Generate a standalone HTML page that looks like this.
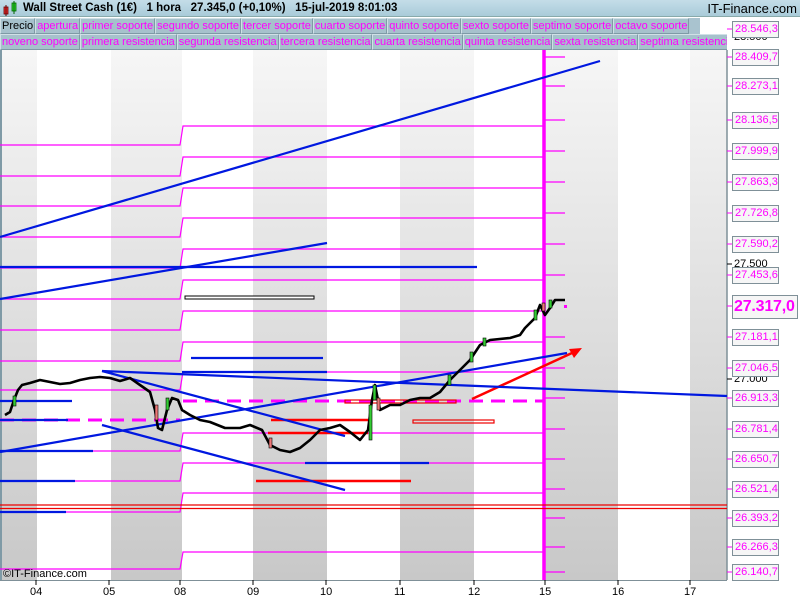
<!DOCTYPE html>
<html><head><meta charset="utf-8"><style>
*{margin:0;padding:0;box-sizing:border-box}
body{width:800px;height:600px;overflow:hidden;background:#fff;font-family:"Liberation Sans",sans-serif;position:relative}
#hdr{position:absolute;left:0;top:0;width:800px;height:17px;background:linear-gradient(#c4dde8,#a9cbd9);border-bottom:1px solid #8aa;font-weight:bold;font-size:11.5px;line-height:17px}
.row{position:absolute;left:0;width:727px;height:16px;background:#a9c3cf;white-space:nowrap;overflow:hidden;font-size:11px;line-height:15px}
.row span{display:inline-block;border:1px solid #7f9aa6;border-top-color:#d0e0e6;border-left-color:#d0e0e6;padding:0 1px;color:#f0f;background:#a6c1cc;height:16px;margin-right:0}
.lbl{position:absolute;left:732px;width:47px;height:17px;border:1px solid #7f9098;background:#f6f6f6;color:#f0f;font-size:11px;line-height:15px;padding-left:2px}
.blk{position:absolute;left:734px;font-size:11px;color:#000}
.tk{position:absolute;top:586px;font-size:11px;color:#000}
</style></head><body>
<div id="hdr"><svg width="22" height="17" style="position:absolute;left:2px;top:0"><rect x="2" y="7" width="4" height="7" fill="#e33" stroke="#600" stroke-width=".8"/><line x1="4" y1="5" x2="4" y2="16" stroke="#600"/><rect x="10" y="3" width="4" height="8" fill="#3d3" stroke="#060" stroke-width=".8"/><line x1="12" y1="1" x2="12" y2="14" stroke="#060"/></svg><span style="position:absolute;left:23px;white-space:pre">Wall Street Cash (1€)   1 hora   27.345,0 (+0,10%)   15-jul-2019 8:01:03</span><span style="position:absolute;right:3px;font-weight:normal;font-size:13px">IT-Finance.com</span></div>
<div class="row" style="top:18px;width:700px;"><span style="color:#000">Precio</span><span>apertura</span><span>primer soporte</span><span>segundo soporte</span><span>tercer soporte</span><span>cuarto soporte</span><span>quinto soporte</span><span>sexto soporte</span><span>septimo soporte</span><span>octavo soporte</span></div>
<div class="row" style="top:34px"><span>noveno soporte</span><span>primera resistencia</span><span>segunda resistencia</span><span>tercera resistencia</span><span>cuarta resistencia</span><span>quinta resistencia</span><span>sexta resistencia</span><span>septima resistencia</span></div>
<svg width="800" height="600" style="position:absolute;left:0;top:0">
<defs><linearGradient id="g" x1="0" y1="0" x2="0" y2="1"><stop offset="0" stop-color="#f6f6f6"/><stop offset="1" stop-color="#c8c8c8"/></linearGradient></defs>
<g transform="translate(0,50)">
<rect x="0" y="0" width="37" height="530" fill="url(#g)"/><rect x="111" y="0" width="71" height="530" fill="url(#g)"/><rect x="253" y="0" width="74" height="530" fill="url(#g)"/><rect x="400" y="0" width="74" height="530" fill="url(#g)"/><rect x="545" y="0" width="73" height="530" fill="url(#g)"/><rect x="690" y="0" width="37" height="530" fill="url(#g)"/>
</g>
<rect x="0" y="50" width="2" height="530" fill="#7f9aa6"/>
<line x1="727" y1="50" x2="727" y2="580" stroke="#7f9098" stroke-width="1.5"/>
<line x1="0" y1="580.5" x2="727" y2="580.5" stroke="#7f9098"/>
<g stroke="#f0f" stroke-width="1.2" fill="none">
<path d="M0 145H180L183 126H544M0 176H180L183 157H544M0 206H180L183 188H544M0 237H180L183 218H544M0 268H180L183 249H544M0 299H180L183 280H544M0 330H180L183 311H544M0 361H180L183 342H544M0 390H180L183 372H544M0 451H180L183 433H544M0 481H180L183 463H544M0 512H180L183 493H544M0 569H180L183 552H544"/>
<path d="M545 57H565M545 86H565M545 120H565M545 151H565M545 182H565M545 213H565M545 244H565M545 275H565M545 337H565M545 368H565M545 398H565M545 429H565M545 459H565M545 489H565M545 518H565M545 547H565M545 572H565"/>
</g>
<path d="M0 420H180M183 401H544" stroke="#f0f" stroke-width="3" stroke-dasharray="14,8"/>
<line x1="544" y1="50" x2="544" y2="580" stroke="#f0f" stroke-width="3.5"/>
<rect x="564" y="305" width="3" height="3" fill="#f0f"/>
<g stroke="#e00" stroke-width="1.2" fill="none"><path d="M0 505H727M0 508.5H727"/><rect x="345" y="400" width="111" height="3"/><rect x="413" y="420" width="81" height="3"/></g>
<g stroke="#f00" stroke-width="2.5"><path d="M271 420H368M268 433H368M256 481H411"/><line x1="472" y1="399" x2="572" y2="353"/></g>
<polygon points="582,348 569,349 574,358" fill="#f00"/>
<rect x="185" y="296" width="129" height="3" fill="#fff" stroke="#000" stroke-width="1"/>
<g stroke="#0018e0" stroke-width="2.2" fill="none">
<line x1="0" y1="237" x2="600" y2="61"/><line x1="0" y1="299" x2="327" y2="243"/>
<line x1="0" y1="452" x2="567" y2="353"/><line x1="102" y1="371" x2="727" y2="396"/>
<line x1="102" y1="371" x2="345" y2="436"/><line x1="102" y1="425" x2="345" y2="490"/>
<path d="M0 267H477M0 401H72M0 420H68M0 451H93M0 481H75M0 512H66M182 372H327M191 358H323M305 463H429"/>
</g>
<polyline fill="none" stroke="#000" stroke-width="2.6" stroke-linejoin="round" points="5,415 10,412 14,400 18,390 22,385 30,383 40,380 60,384 70,383 80,380 90,378 100,377 110,378 120,381 130,378 140,385 150,392 155,410 158,428 162,430 167,410 172,398 178,400 182,410 190,415 200,420 210,422 225,428 240,428 250,425 262,430 270,445 280,450 290,452 300,448 310,440 320,430 330,428 340,425 350,432 360,440 368,430 372,400 375,385 380,410 390,405 400,405 410,400 420,398 430,398 440,392 450,380 460,370 470,360 480,345 490,340 510,338 520,335 525,328 535,318 540,305 545,315 550,308 555,300 565,300"/>
<g fill="#3c3" stroke="#000" stroke-width=".6"><rect x="13" y="396" width="3" height="10"/><rect x="166" y="398" width="3" height="12"/><rect x="369" y="405" width="3" height="35"/><rect x="373" y="385" width="3" height="15"/><rect x="448" y="375" width="3" height="10"/><rect x="470" y="352" width="3" height="10"/><rect x="483" y="338" width="3" height="8"/><rect x="534" y="310" width="3" height="10"/><rect x="549" y="300" width="3" height="8"/></g>
<g fill="#e77" stroke="#000" stroke-width=".6"><rect x="155" y="405" width="3" height="15"/><rect x="269" y="438" width="3" height="10"/><rect x="377" y="398" width="3" height="12"/><rect x="542" y="303" width="3" height="8"/></g>
<g stroke="#f0f" stroke-width="1"><path d="M727 29H732M727 57H732M727 86H732M727 120H732M727 151H732M727 182H732M727 213H732M727 244H732M727 275H732M727 306H732M727 337H732M727 368H732M727 398H732M727 429H732M727 459H732M727 489H732M727 518H732M727 547H732M727 572H732"/></g>
<g stroke="#000"><path d="M727 264H732M727 379H732"/><path d="M36 580V585M109 580V585M180 580V585M253 580V585M326 580V585M400 580V585M474 580V585M545 580V585M618 580V585M690 580V585"/></g>
</svg>
<div class="blk" style="top:31px">28.500</div><div class="blk" style="top:258px">27.500</div><div class="blk" style="top:373px">27.000</div>
<div class="lbl" style="top:21px">28.546,3</div><div class="lbl" style="top:49px">28.409,7</div><div class="lbl" style="top:78px">28.273,1</div><div class="lbl" style="top:112px">28.136,5</div><div class="lbl" style="top:143px">27.999,9</div><div class="lbl" style="top:174px">27.863,3</div><div class="lbl" style="top:205px">27.726,8</div><div class="lbl" style="top:236px">27.590,2</div><div class="lbl" style="top:267px">27.453,6</div>
<div class="lbl" style="top:295px;width:66px;height:24px;font-size:16px;font-weight:bold;line-height:22px;padding-left:1px;letter-spacing:-0.2px">27.317,0</div>
<div class="lbl" style="top:329px">27.181,1</div><div class="lbl" style="top:360px">27.046,5</div><div class="lbl" style="top:390px">26.913,3</div><div class="lbl" style="top:421px">26.781,4</div><div class="lbl" style="top:451px">26.650,7</div><div class="lbl" style="top:481px">26.521,4</div><div class="lbl" style="top:510px">26.393,2</div><div class="lbl" style="top:539px">26.266,3</div><div class="lbl" style="top:564px">26.140,7</div>
<div style="position:absolute;left:3px;top:568px;font-size:11px">©IT-Finance.com</div>
<div class="tk" style="left:30px">04</div><div class="tk" style="left:103px">05</div><div class="tk" style="left:174px">08</div><div class="tk" style="left:247px">09</div><div class="tk" style="left:320px">10</div><div class="tk" style="left:394px">11</div><div class="tk" style="left:468px">12</div><div class="tk" style="left:539px">15</div><div class="tk" style="left:612px">16</div><div class="tk" style="left:684px">17</div>
</body></html>
